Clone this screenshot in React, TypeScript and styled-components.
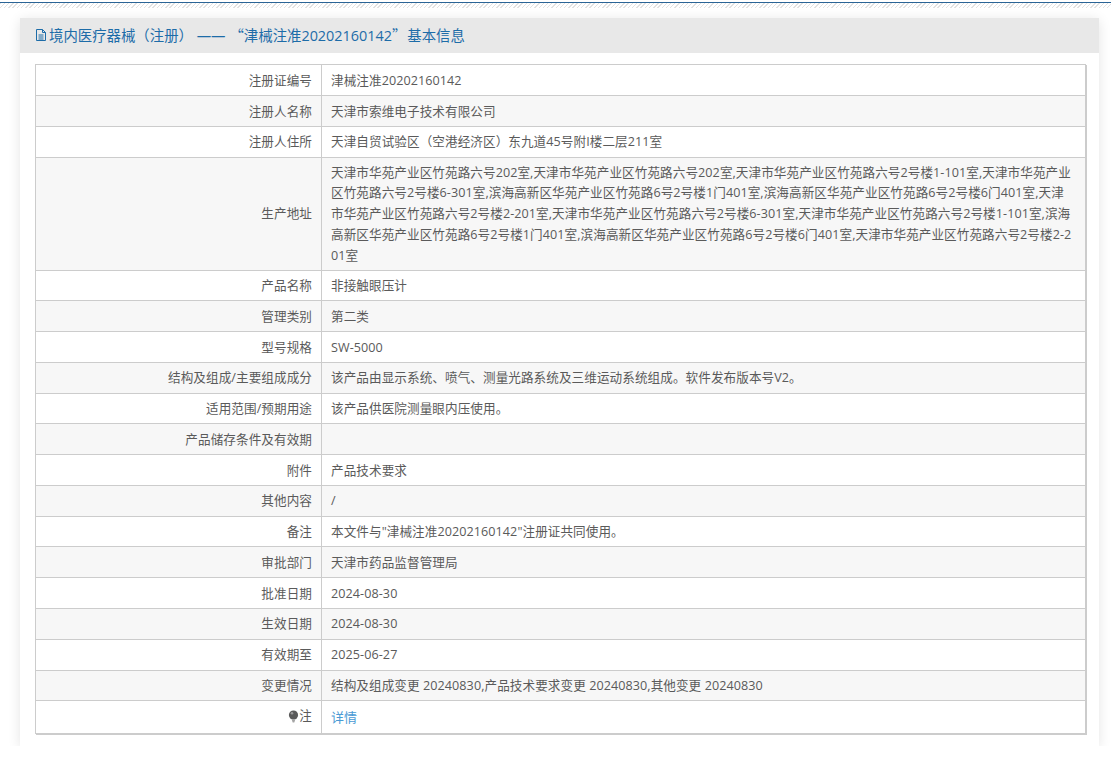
import React from "react";
import styled, { createGlobalStyle } from "styled-components";

const Global = createGlobalStyle`
  html, body { margin: 0; padding: 0; background: #fff; }
  body { font-family: "Open Sans", "Noto Sans CJK SC", sans-serif; font-size: 12.6px; letter-spacing: 0.07px; color: #5a5a5a; overflow: hidden; }
`;

const TopStripe = styled.div`
  height: 5px;
  margin-top: 2px;
  border-top: 1px solid #2a6496;
  background: repeating-linear-gradient(135deg, #e2e2e2 0 1px, #fff 1px 3px);
`;

const Card = styled.section`
  margin: 10px 12px 0 20px;
  background: #fff;
  box-shadow: 0 2px 12px rgba(0, 0, 0, 0.11);
  padding-bottom: 12px;
`;

const CardHeader = styled.h1`
  display: flex;
  align-items: center;
  gap: 2px;
  box-sizing: border-box;
  height: 35px;
  margin: 0 0 11.3px;
  padding: 0 15px 2px;
  background: #e8e8e8;
  color: #1d6ca8;
  font-size: 14.4px;
  font-weight: 400;
  letter-spacing: 0;
`;

const CjkPunct = styled.span<{ $before?: number; $after?: number }>`
  font-family: "Noto Sans CJK SC", sans-serif;
  margin-left: ${(p) => p.$before ?? 0}px;
  margin-right: ${(p) => p.$after ?? 0}px;
`;

const InfoTable = styled.table`
  width: 1051px;
  margin-left: 15px;
  border-collapse: collapse;
  table-layout: fixed;
  box-shadow: 1px 1px 0 #ccc;
`;

const Row = styled.tr<{ $alt: boolean }>`
  background: ${(p) => (p.$alt ? "#f7f7f7" : "#fff")};
`;

const LabelCell = styled.th`
  width: 286px;
  height: 30.77px;
  box-sizing: border-box;
  padding: 5px 9px 3px;
  border: 1px solid #ccc;
  text-align: right;
  font-weight: 400;
  line-height: 20.8px;
`;

const ValueCell = styled.td`
  padding: 5px 9px 3px;
  border: 1px solid #ccc;
  line-height: 20.8px;
  word-break: break-all;
`;

const DetailLink = styled.a`
  display: inline-block;
  color: #4a9ad4;
  font-size: 13px;
  text-decoration: none;
`;

const NoteLabel = styled.span`
  display: inline-flex;
  align-items: center;
  gap: 0;
`;

const DocIcon = () => (
  <svg width="12" height="14" viewBox="0 0 12 14" fill="none" stroke="#1d6ca8" strokeWidth="1">
    <path d="M1.5 1.5h6l3 3v8h-9z" />
    <path d="M7.5 1.5v3h3M3.5 7h5M3.5 9h5M3.5 11h5" />
  </svg>
);

const BulbIcon = () => (
  <svg width="11" height="13" viewBox="0 0 11 13">
    <circle cx="5.5" cy="5" r="4.6" fill="#5a5a5a" />
    <circle cx="4" cy="3.3" r="1.3" fill="#9a9a9a" />
    <path d="M3.6 9.2h3.8L6.3 12.5H4.7z" fill="#a5a5a5" />
  </svg>
);

const address =
  "天津市华苑产业区竹苑路六号202室,天津市华苑产业区竹苑路六号202室,天津市华苑产业区竹苑路六号2号楼1-101室,天津市华苑产业区竹苑路六号2号楼6-301室,滨海高新区华苑产业区竹苑路6号2号楼1门401室,滨海高新区华苑产业区竹苑路6号2号楼6门401室,天津市华苑产业区竹苑路六号2号楼2-201室,天津市华苑产业区竹苑路六号2号楼6-301室,天津市华苑产业区竹苑路六号2号楼1-101室,滨海高新区华苑产业区竹苑路6号2号楼1门401室,滨海高新区华苑产业区竹苑路6号2号楼6门401室,天津市华苑产业区竹苑路六号2号楼2-201室";

const rows: [string, string][] = [
  ["注册证编号", "津械注准20202160142"],
  ["注册人名称", "天津市索维电子技术有限公司"],
  ["注册人住所", "天津自贸试验区（空港经济区）东九道45号附I楼二层211室"],
  ["生产地址", address],
  ["产品名称", "非接触眼压计"],
  ["管理类别", "第二类"],
  ["型号规格", "SW-5000"],
  ["结构及组成/主要组成成分", "该产品由显示系统、喷气、测量光路系统及三维运动系统组成。软件发布版本号V2。"],
  ["适用范围/预期用途", "该产品供医院测量眼内压使用。"],
  ["产品储存条件及有效期", ""],
  ["附件", "产品技术要求"],
  ["其他内容", "/"],
  ["备注", "本文件与\"津械注准20202160142\"注册证共同使用。"],
  ["审批部门", "天津市药品监督管理局"],
  ["批准日期", "2024-08-30"],
  ["生效日期", "2024-08-30"],
  ["有效期至", "2025-06-27"],
  ["变更情况", "结构及组成变更 20240830,产品技术要求变更 20240830,其他变更 20240830"],
];

export default function App() {
  return (
    <>
      <Global />
      <TopStripe />
      <Card>
        <CardHeader>
          <DocIcon />
          <span>
            境内医疗器械（注册） ——<CjkPunct $before={4}>“</CjkPunct>津械注准20202160142
            <CjkPunct $after={1}>”</CjkPunct>基本信息
          </span>
        </CardHeader>
        <InfoTable>
          <tbody>
            {rows.map(([label, value], i) => (
              <Row key={label} $alt={i % 2 === 1}>
                <LabelCell>{label}</LabelCell>
                <ValueCell>{value}</ValueCell>
              </Row>
            ))}
            <Row $alt={false}>
              <LabelCell>
                <NoteLabel>
                  <BulbIcon />注
                </NoteLabel>
              </LabelCell>
              <ValueCell>
                <DetailLink href="#">详情</DetailLink>
              </ValueCell>
            </Row>
          </tbody>
        </InfoTable>
      </Card>
    </>
  );
}
